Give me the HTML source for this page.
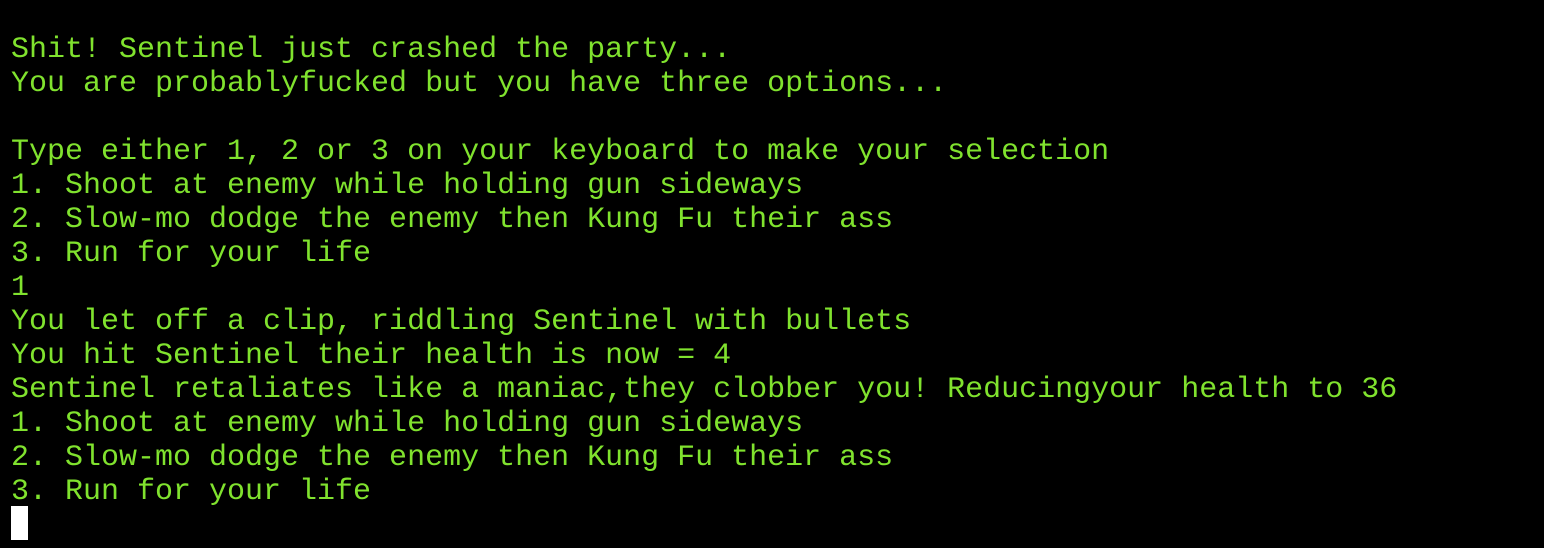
<!DOCTYPE html>
<html><head><style>
html,body{margin:0;padding:0;background:#000;width:1544px;height:548px;overflow:hidden}
pre{margin:0;position:absolute;left:11px;top:33px;font-family:"Liberation Mono",monospace;font-size:30px;line-height:34px;color:#80e22e;font-weight:bold;-webkit-text-stroke:0}
.cur{position:absolute;left:11px;top:506px;width:17px;height:34px;background:#fff}
</style></head><body>
<pre style="font-weight:normal">Shit! Sentinel just crashed the party...
You are probablyfucked but you have three options...

Type either 1, 2 or 3 on your keyboard to make your selection
1. Shoot at enemy while holding gun sideways
2. Slow-mo dodge the enemy then Kung Fu their ass
3. Run for your life
1
You let off a clip, riddling Sentinel with bullets
You hit Sentinel their health is now = 4
Sentinel retaliates like a maniac,they clobber you! Reducingyour health to 36
1. Shoot at enemy while holding gun sideways
2. Slow-mo dodge the enemy then Kung Fu their ass
3. Run for your life</pre>
<div class="cur"></div>
</body></html>
